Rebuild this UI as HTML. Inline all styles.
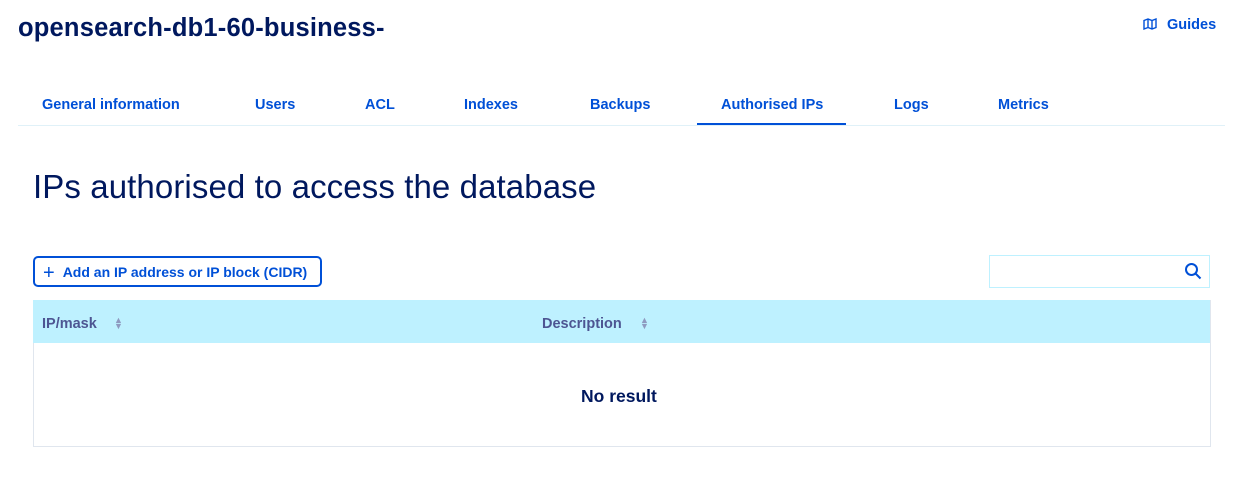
<!DOCTYPE html>
<html><head><style>
body{margin:0;width:1245px;height:486px;background:#fff;font-family:"Liberation Sans",sans-serif;position:relative;overflow:hidden}
.a{position:absolute;white-space:nowrap}
.tab{position:absolute;top:97px;font-size:14.5px;font-weight:bold;color:#0050d7}
</style></head><body>
<div class="a" style="left:18px;top:14px;font-size:25.5px;font-weight:bold;color:#00185e;letter-spacing:0.2px">opensearch-db1-60-business-</div>
<div class="a" style="left:1143px;top:17px;font-size:14.5px;font-weight:bold;color:#0050d7">
<svg width="14" height="12" viewBox="0 0 14 12" style="vertical-align:-1px;margin-right:10px"><path d="M1 2.5l4-1.5 4 1.5 4-1.5v8.5l-4 1.5-4-1.5-4 1.5z M5 1v8.5 M9 2.5v8.5" fill="none" stroke="#0050d7" stroke-width="1.4"/></svg>Guides</div>
<div class="tab" style="left:42px">General information</div>
<div class="tab" style="left:255px">Users</div>
<div class="tab" style="left:365px">ACL</div>
<div class="tab" style="left:464px">Indexes</div>
<div class="tab" style="left:590px">Backups</div>
<div class="tab" style="left:721px">Authorised IPs</div>
<div class="tab" style="left:894px">Logs</div>
<div class="tab" style="left:998px">Metrics</div>
<div class="a" style="left:18px;top:125px;width:1207px;height:1px;background:#e0f1f8"></div>
<div class="a" style="left:697px;top:123px;width:149px;height:2px;background:#0050d7"></div>
<div class="a" style="left:33px;top:168px;font-size:33px;color:#00185e;letter-spacing:0.1px">IPs authorised to access the database</div>
<div class="a" style="left:33px;top:256px;width:285px;height:27px;border:2px solid #0050d7;border-radius:5px;font-size:14px;font-weight:bold;color:#0050d7;line-height:28px">
<span style="font-weight:normal;font-size:20px;margin:0 8px 0 8px;vertical-align:-2px">+</span>Add an IP address or IP block (CIDR)</div>
<div class="a" style="left:989px;top:255px;width:219px;height:31px;border:1px solid #bef1ff"></div>
<svg class="a" style="left:1184px;top:262px" width="18" height="18" viewBox="0 0 18 18"><circle cx="7.5" cy="7.5" r="5.5" fill="none" stroke="#0050d7" stroke-width="2"/><path d="M11.5 11.5l5 5" stroke="#0050d7" stroke-width="2"/></svg>
<div class="a" style="left:33px;top:300px;width:1176px;height:146px;border:1px solid #e0e6ee;border-top:none"></div>
<div class="a" style="left:33px;top:300px;width:1177px;height:43px;background:#bef1ff"></div>
<div class="a" style="left:42px;top:316px;font-size:14.5px;font-weight:bold;color:#4d5592">IP/mask</div>
<div class="a" style="left:114px;top:317px;font-size:9px;color:#8e9ac0;line-height:6px">▲<br>▼</div>
<div class="a" style="left:542px;top:316px;font-size:14.5px;font-weight:bold;color:#4d5592">Description</div>
<div class="a" style="left:640px;top:317px;font-size:9px;color:#8e9ac0;line-height:6px">▲<br>▼</div>
<div class="a" style="left:581px;top:386px;font-size:17.5px;font-weight:bold;color:#00185e">No result</div>
</body></html>
